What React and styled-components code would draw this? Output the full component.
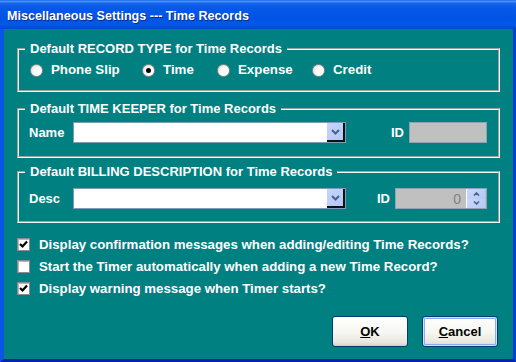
import styled, { createGlobalStyle } from "styled-components";

const GlobalStyle = createGlobalStyle`
  html, body {
    margin: 0;
    padding: 0;
    background: #ffffff;
  }
  body {
    font-family: "Liberation Sans", Arial, sans-serif;
  }
`;

function Chevron({ up }) {
    return (
        <svg width="9" height="6" viewBox="0 0 9 6">
            <path
                d={up ? "M1 5 L4.5 1.5 L8 5" : "M1 1 L4.5 4.5 L8 1"}
                fill="none"
                stroke="#4d6185"
                strokeWidth="2"
            />
        </svg>
    );
}

function SmallChevron({ up }) {
    return (
        <svg width="7" height="4" viewBox="0 0 7 4">
            <path
                d={up ? "M1 3.5 L3.5 1 L6 3.5" : "M1 0.5 L3.5 3 L6 0.5"}
                fill="none"
                stroke="#4d6185"
                strokeWidth="1.6"
            />
        </svg>
    );
}

function Check() {
    return (
        <svg width="9" height="9" viewBox="0 0 9 9">
            <path d="M1 4 L3.5 6.5 L8 1.5" fill="none" stroke="#000" strokeWidth="2.2" />
        </svg>
    );
}

function App() {
    const types = [
        { label: "Phone Slip", checked: false },
        { label: "Time", checked: true },
        { label: "Expense", checked: false },
        { label: "Credit", checked: false },
    ];

    const options = [
        { label: "Display confirmation messages when adding/editing Time Records?", checked: true },
        { label: "Start the Timer automatically when adding a new Time Record?", checked: false },
        { label: "Display warning message when Timer starts?", checked: true },
    ];

    return (
        <>
            <GlobalStyle />
            <Window>
                <TitleBar>Miscellaneous Settings --- Time Records</TitleBar>
                <Body>
                    <Group $mt={0}>
                        <Legend>Default RECORD TYPE for Time Records</Legend>
                        <RadioRow>
                            {types.map((t) => (
                                <RadioItem key={t.label}>
                                    <Radio $checked={t.checked} />
                                    {t.label}
                                </RadioItem>
                            ))}
                        </RadioRow>
                    </Group>

                    <Group $mt={9}>
                        <Legend>Default TIME KEEPER for Time Records</Legend>
                        <FieldRow $pt={5} $pb={13}>
                            <FieldLabel>Name</FieldLabel>
                            <Combo>
                                <DropButton>
                                    <Chevron />
                                </DropButton>
                            </Combo>
                            <IdLabel $ml={45}>ID</IdLabel>
                            <IdField $w={78} />
                        </FieldRow>
                    </Group>

                    <Group $mt={6}>
                        <Legend>Default BILLING DESCRIPTION for Time Records</Legend>
                        <FieldRow $pt={8} $pb={12}>
                            <FieldLabel>Desc</FieldLabel>
                            <Combo>
                                <DropButton>
                                    <Chevron />
                                </DropButton>
                            </Combo>
                            <IdLabel $ml={31}>ID</IdLabel>
                            <IdField $w={92}>
                                <SpinValue>0</SpinValue>
                                <Spin>
                                    <SpinHalf>
                                        <SmallChevron up />
                                    </SpinHalf>
                                    <SpinHalf>
                                        <SmallChevron />
                                    </SpinHalf>
                                </Spin>
                            </IdField>
                        </FieldRow>
                    </Group>

                    <Options>
                        {options.map((o) => (
                            <CheckRow key={o.label}>
                                <CheckBox>{o.checked && <Check />}</CheckBox>
                                {o.label}
                            </CheckRow>
                        ))}
                    </Options>

                    <Buttons>
                        <Button type="button"><u>O</u>K</Button>
                        <Button type="button" $default><u>C</u>ancel</Button>
                    </Buttons>
                </Body>
            </Window>
        </>
    );
}

const Window = styled.div`
    width: 516px;
    height: 362px;
    display: flex;
    flex-direction: column;
    font: bold 13px "Liberation Sans", Arial, sans-serif;
`;

const TitleBar = styled.div`
    height: 29px;
    flex: none;
    box-sizing: border-box;
    padding: 3px 0 0 7px;
    display: flex;
    align-items: center;
    color: #ffffff;
    font-size: 12.6px;
    text-shadow: 1px 1px 0 #0a2a8a;
    background: linear-gradient(
        180deg,
        #1c6cf0 0%,
        #4592fa 5%,
        #1563ec 12%,
        #0558e8 30%,
        #0054e3 65%,
        #0258e8 85%,
        #0046d2 100%
    );
`;

const Body = styled.div`
    flex: 1;
    background: #008080;
    border-left: 4px solid #0a55e6;
    border-right: 3px solid #0040d8;
    border-bottom: 3px solid #0024b0;
    padding: 12px 13px 0 13px;
    color: #ffffff;
`;

const Group = styled.fieldset`
    margin: ${(p) => p.$mt}px 0 0;
    padding: 0;
    min-width: 0;
    border: 2px groove #f4f4f4;
`;

const Legend = styled.legend`
    margin-left: 6px;
    padding: 0 5px;
    line-height: 16px;
    color: #ffffff;
`;

const RadioRow = styled.div`
    display: grid;
    grid-template-columns: 112px 75px 95px auto;
    padding: 6px 0 13px 11px;
    line-height: 14px;
`;

const RadioItem = styled.label`
    display: flex;
    align-items: center;
    gap: 8px;
    font-size: 13.3px;
`;

const Radio = styled.span`
    width: 13px;
    height: 13px;
    box-sizing: border-box;
    border-radius: 50%;
    border: 1px solid #8c8c8c;
    background: radial-gradient(circle at 65% 65%, #ffffff 35%, #d6d6d0 100%);
    display: flex;
    align-items: center;
    justify-content: center;
    &::after {
        content: "";
        width: 5px;
        height: 5px;
        border-radius: 50%;
        background: ${(p) => (p.$checked ? "#000000" : "transparent")};
    }
`;

const FieldRow = styled.div`
    display: flex;
    align-items: center;
    padding: ${(p) => p.$pt}px 0 ${(p) => p.$pb}px 10px;
`;

const FieldLabel = styled.span`
    width: 44px;
`;

const Combo = styled.div`
    width: 273px;
    height: 21px;
    box-sizing: border-box;
    background: #ffffff;
    border: 1px solid #7f9db9;
    display: flex;
    justify-content: flex-end;
    padding: 0;
`;

const DropButton = styled.div`
    width: 18px;
    height: 19px;
    box-sizing: border-box;
    border-right: 2px solid #101010;
    border-bottom: 2px solid #101010;
    background: linear-gradient(135deg, #c6d6fc 0%, #b2c8f7 100%);
    display: flex;
    align-items: center;
    justify-content: center;
`;

const IdLabel = styled.span`
    margin-left: ${(p) => p.$ml}px;
    margin-right: 5px;
`;

const IdField = styled.div`
    width: ${(p) => p.$w}px;
    height: 21px;
    box-sizing: border-box;
    background: #c0c0c0;
    border: 1px solid #8fa3b6;
    display: flex;
    align-items: stretch;
    justify-content: flex-end;
`;

const SpinValue = styled.span`
    font: 14px "Liberation Sans", Arial, sans-serif;
    color: #808080;
    display: flex;
    align-items: center;
    padding-right: 5px;
`;

const Spin = styled.div`
    width: 18px;
    margin: 0 1px 0 0;
    display: flex;
    flex-direction: column;
    border-left: 1px solid #ffffff;
`;

const SpinHalf = styled.div`
    flex: 1;
    display: flex;
    align-items: center;
    justify-content: center;
    background: linear-gradient(135deg, #c9d8fc 0%, #b4c9f7 100%);
`;

const Options = styled.div`
    margin-top: 10px;
    display: flex;
    flex-direction: column;
`;

const CheckRow = styled.label`
    height: 22px;
    display: flex;
    align-items: center;
    gap: 9px;
    font-size: 13.25px;
`;

const CheckBox = styled.span`
    width: 13px;
    height: 13px;
    flex: none;
    box-sizing: border-box;
    background: #ffffff;
    border: 1px solid #8c8c8c;
    box-shadow: inset 1px 1px 0 #b8b8b8;
    display: flex;
    align-items: center;
    justify-content: center;
`;

const Buttons = styled.div`
    margin-top: 17px;
    padding-right: 2px;
    display: flex;
    justify-content: flex-end;
    gap: 14px;
`;

const Button = styled.button`
    width: 76px;
    height: 31px;
    padding: 0;
    border: 1px solid #003c74;
    border-radius: 3px;
    font: bold 13px "Liberation Sans", Arial, sans-serif;
    color: #000000;
    background: linear-gradient(180deg, #ffffff 0%, #f6f6f2 55%, #e8e6dc 88%, #d6d0c4 100%);
    box-shadow: ${(p) =>
        p.$default
            ? "inset 0 0 0 1px #cee2fc, inset 0 0 0 2px #89adf0"
            : "inset 0 -1px 0 #d6d0c4"};
    u {
        text-decoration: underline;
    }
`;

export default App;
